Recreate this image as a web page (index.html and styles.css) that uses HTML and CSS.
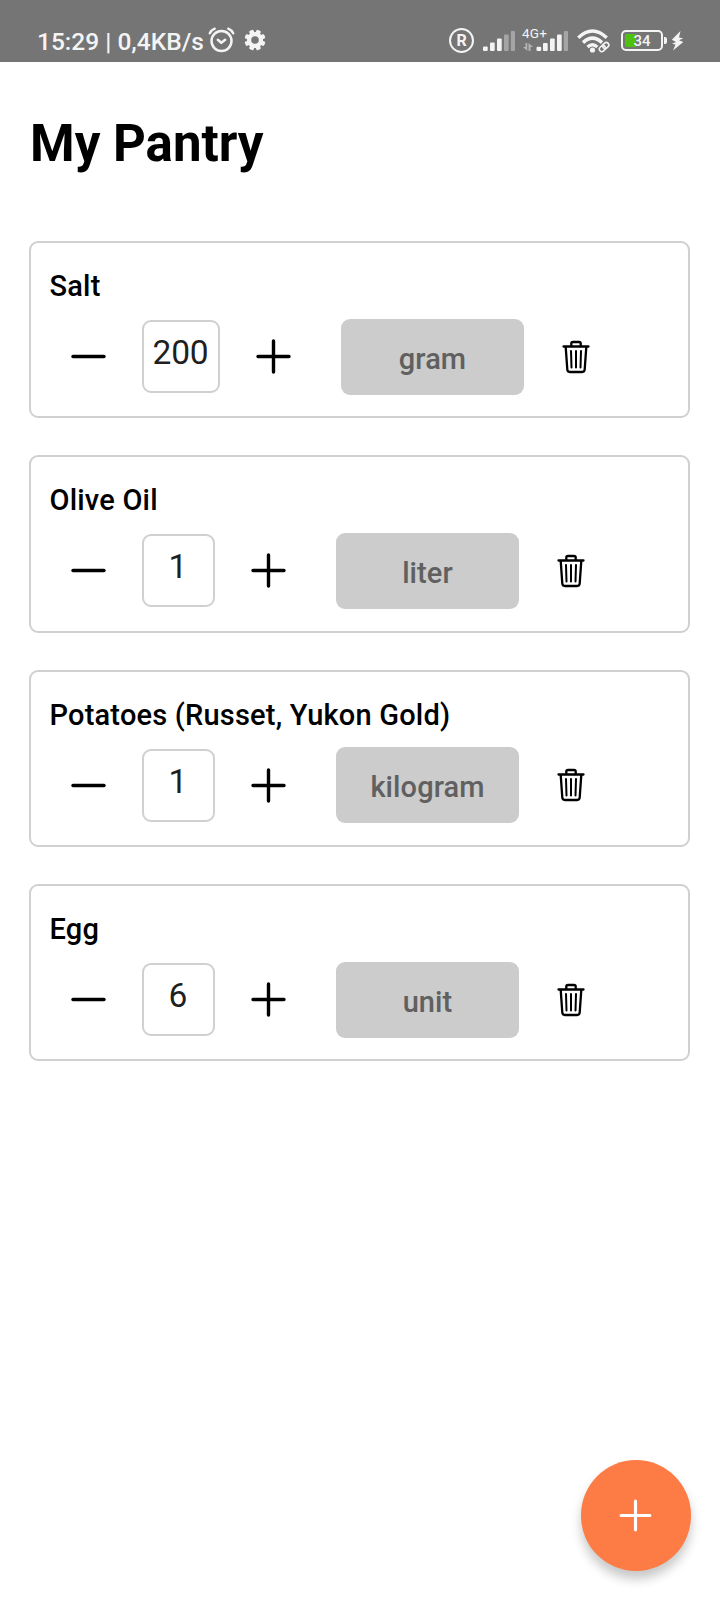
FILE: index.html
```html
<!DOCTYPE html>
<html lang="en">
<head>
<meta charset="utf-8">
<title>My Pantry</title>
<link rel="stylesheet" href="styles.css">
</head>
<body>
<svg class="defs" aria-hidden="true">
  <symbol id="minus" viewBox="0 0 55 55"><path d="M12 27.500H43" fill="none" stroke="currentColor" stroke-width="3.400" stroke-linecap="round"/></symbol>
  <symbol id="plus" viewBox="0 0 55 55"><path d="M12 27.500H43M27.500 12V43" fill="none" stroke="currentColor" stroke-width="3.400" stroke-linecap="round"/></symbol>
  <symbol id="trash" viewBox="0 0 28 34"><g fill="none" stroke="currentColor" stroke-width="2.300" stroke-linecap="round" stroke-linejoin="round"><path d="M1.500 6.500H26.500M9.300 6.300V3.600Q9.300 2 11 2H17Q18.700 2 18.700 3.600V6.300M3.700 6.800L5.300 29.500Q5.500 32 7.800 32H20.200Q22.500 32 22.700 29.500L24.300 6.800"/><path stroke-width="2" d="M9 11L9.500 27.500M14 11V27.500M19 11L18.500 27.500"/></g></symbol>
</svg>
<header class="status">
  <span class="clock">15:29 | 0,4KB/s</span>
  <svg class="alarm" width="27" height="26" viewBox="0 0 27 26"><g fill="none" stroke="currentColor" stroke-width="2.500" stroke-linecap="round" stroke-linejoin="round"><circle cx="13.500" cy="14" r="10"/><path d="M1.800 6.300Q3.500 3 6.700 1.700M20.300 1.700Q23.500 3 25.200 6.300M9.800 12.700L13.300 15.700L17.200 12.700"/></g></svg>
  <svg class="gear" width="22" height="22" viewBox="-11 -11 22 22"><g fill="currentColor" transform="rotate(22.500)"><rect x="-2.300" y="-10.500" width="4.600" height="21" rx="1.300"/><rect x="-2.300" y="-10.500" width="4.600" height="21" rx="1.300" transform="rotate(45)"/><rect x="-2.300" y="-10.500" width="4.600" height="21" rx="1.300" transform="rotate(90)"/><rect x="-2.300" y="-10.500" width="4.600" height="21" rx="1.300" transform="rotate(135)"/><circle r="8"/></g><circle r="3.800" fill="#757575"/></svg>
  <span class="registered">R</span>
  <svg class="signal" width="33" height="22" viewBox="0 0 33 22" fill="currentColor"><rect y="16.500" width="4.700" height="4.500" rx="1"/><rect x="7" y="12.500" width="4.700" height="8.500" rx="1"/><rect x="14" y="8.500" width="4.700" height="12.500" rx="1"/><g opacity=".38"><rect x="21" y="4.500" width="4.700" height="16.500" rx="1"/><rect x="27.800" y="1" width="4.200" height="20" rx="1"/></g></svg>
  <span class="mobile">
    <span class="network">4G+</span>
    <svg width="46" height="22" viewBox="0 0 46 22" fill="currentColor"><path opacity=".5" d="M0 17L4.300 21V13H2.500V17ZM5.500 21V13L10 17H7.500V21Z"/><rect x="13.500" y="16.800" width="4.700" height="4.200" rx="1"/><rect x="20" y="13" width="4.700" height="8" rx="1"/><rect x="27" y="8.500" width="4.700" height="12.500" rx="1"/><rect x="34" y="4.500" width="4.700" height="16.500" rx="1"/><rect x="40.800" y="1" width="4.200" height="20" rx="1" opacity=".38"/></svg>
  </span>
  <svg class="wifi" width="35" height="24" viewBox="0 0 35 24"><g fill="none" stroke="currentColor"><path stroke-width="3.500" d="M1.300 8.700Q15.500 -4.700 29.700 8.700M6 13.600Q15.500 4.700 25 13.600M10.500 18Q15.500 13.500 20.300 18"/><g stroke-width="1.600" transform="rotate(-42 27 18)"><rect x="21.500" y="15.600" width="6.500" height="5" rx="2.500"/><rect x="26" y="15.600" width="6.500" height="5" rx="2.500"/></g></g><circle cx="15.500" cy="21" r="2.600" fill="currentColor"/></svg>
  <span class="battery"><span class="level">34</span></span>
  <svg class="bolt" width="13" height="22" viewBox="0 0 13 22"><path fill="currentColor" d="M9.500 1L.8 9.800L5 12L1 13.800L4.500 14.500L2 20.500L12.300 12L8 10.200L12.300 8.300L8 7.500Z"/></svg>
</header>
<main class="page">
  <h1 class="heading">My Pantry</h1>
  <section class="list">
    <article class="card">
      <h2 class="name">Salt</h2>
      <div class="controls"><svg class="step"><use href="#minus"/></svg><span class="amount wide">200</span><svg class="step"><use href="#plus"/></svg><span class="unit">gram</span><svg class="trash"><use href="#trash"/></svg></div>
    </article>
    <article class="card">
      <h2 class="name">Olive Oil</h2>
      <div class="controls"><svg class="step"><use href="#minus"/></svg><span class="amount">1</span><svg class="step"><use href="#plus"/></svg><span class="unit">liter</span><svg class="trash"><use href="#trash"/></svg></div>
    </article>
    <article class="card">
      <h2 class="name">Potatoes (Russet, Yukon Gold)</h2>
      <div class="controls"><svg class="step"><use href="#minus"/></svg><span class="amount">1</span><svg class="step"><use href="#plus"/></svg><span class="unit">kilogram</span><svg class="trash"><use href="#trash"/></svg></div>
    </article>
    <article class="card">
      <h2 class="name">Egg</h2>
      <div class="controls"><svg class="step"><use href="#minus"/></svg><span class="amount">6</span><svg class="step"><use href="#plus"/></svg><span class="unit">unit</span><svg class="trash"><use href="#trash"/></svg></div>
    </article>
  </section>
</main>
<div class="fab"><svg class="fab-icon"><use href="#plus"/></svg></div>
</body>
</html>
```
FILE: styles.css
```css
* { box-sizing: border-box; }
body {
  margin: 0;
  height: 1600px;
  background: #fff;
  color: #000;
  font-family: Roboto, sans-serif;
  overflow: hidden;
}
svg { display: block; flex: none; }
.defs { position: absolute; width: 0; height: 0; }
.status {
  display: flex;
  align-items: center;
  height: 62px;
  padding: 20px 0 0 37px;
  background: #757575;
  color: #f4f4f4;
}
.clock { width: 171px; font-size: 24.5px; line-height: 28px; font-weight: 500; white-space: nowrap; margin-top: 2px; }
.alarm { margin-top: -3px; }
.gear { margin-left: 9px; margin-top: -2px; }
.registered {
  width: 25px;
  height: 25px;
  margin: -1px 0 0 183px;
  border: 2.5px solid;
  border-radius: 50%;
  font-size: 16px;
  line-height: 21px;
  font-weight: 700;
  text-align: center;
}
.signal { margin: -1px 0 0 9px; }
.mobile { position: relative; margin: -1px 0 0 7px; }
.network { position: absolute; left: -1px; top: -4px; font-size: 13.5px; line-height: 15px; letter-spacing: .2px; }
.wifi { margin: -1px 0 0 8px; }
.battery {
  position: relative;
  width: 42px;
  height: 21px;
  margin: -2px 0 0 9px;
  padding: 2px;
  border: 2px solid;
  border-radius: 5px;
}
.battery::after {
  content: "";
  position: absolute;
  right: -6px;
  top: 5px;
  width: 3px;
  height: 7px;
  background: currentColor;
  border-radius: 0 2px 2px 0;
}
.level {
  display: block;
  height: 13px;
  border-radius: 2px;
  background: linear-gradient(90deg, #4fc010 11px, transparent 11px);
  font-size: 15px;
  line-height: 14px;
  font-weight: 500;
  text-align: center;
}
.bolt { margin: -1px 0 0 8px; }
.page { padding: 51px 30px 0 29px; }
.heading { margin: 0 0 0 1px; font-size: 51px; line-height: 61px; font-weight: 700; }
.list { display: flex; flex-direction: column; gap: 37px; margin-top: 67px; }
.card { height: 177.300px; padding: 26px 0 0 18.500px; border: 2px solid #d0d0d0; border-radius: 9px; }
.name { margin: 0; font-size: 29px; line-height: 34px; font-weight: 500; letter-spacing: .2px; white-space: nowrap; }
.controls { display: flex; align-items: center; height: 76px; margin: 15.700px 0 0 11.500px; }
.step { width: 55px; height: 55px; }
.amount {
  width: 73px;
  height: 73px;
  margin: 0 26px 0 25.500px;
  border: 2px solid #d0d0d0;
  border-radius: 9px;
  color: #1f1f1f;
  font-size: 33.5px;
  line-height: 61px;
  text-align: center;
}
.wide { width: 78px; letter-spacing: -.2px; }
.unit {
  width: 183px;
  height: 76px;
  margin: 0 38px 0 40.500px;
  border-radius: 9px;
  background: #ccc;
  color: #606060;
  font-size: 29px;
  line-height: 80px;
  font-weight: 500;
  letter-spacing: .1px;
  text-align: center;
}
.trash { width: 28px; height: 34px; }
.fab {
  position: absolute;
  left: 580.500px;
  top: 1460px;
  display: flex;
  align-items: center;
  justify-content: center;
  width: 110px;
  height: 110.500px;
  border-radius: 50%;
  background: #fd7c46;
  color: #fff;
  box-shadow: 0 8px 11px rgba(0, 0, 0, .22);
}
.fab-icon { width: 51px; height: 51px; }
```
